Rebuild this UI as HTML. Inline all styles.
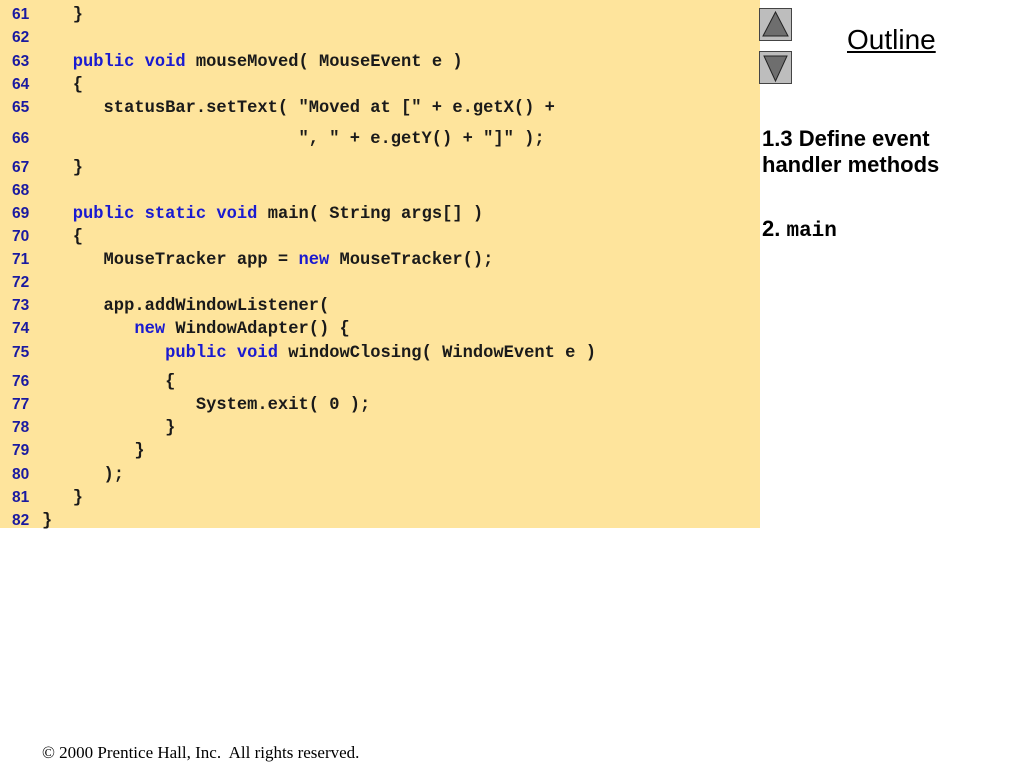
<!DOCTYPE html>
<html><head><meta charset="utf-8"><style>
body{margin:0;width:1024px;height:768px;background:#fff;position:relative;overflow:hidden}
#box{position:absolute;left:0;top:0;width:760px;height:528px;background:#FEE49C}
.l{position:absolute;left:0;height:20px;line-height:20px;white-space:pre;font:bold 17.1px "Liberation Mono",monospace;color:#1a1a1a}
.n{position:absolute;left:12px;height:20px;line-height:20px;font:bold 15.5px "Liberation Sans",sans-serif;color:#1a1aa0}
.c{position:absolute;left:42px}
.k{color:#1a1ad0}
.btn{position:absolute;left:759px;width:33px;height:33px;background:#bdbdbd;border:1px solid #444;box-sizing:border-box}
.side{position:absolute;font:bold 22px "Liberation Sans",sans-serif;color:#000}
</style></head><body>
<div id="box"></div>
<div class="l" style="top:6px"><span class="n">61</span><span class="c">   }</span></div>
<div class="l" style="top:29px"><span class="n">62</span></div>
<div class="l" style="top:53px"><span class="n">63</span><span class="c">   <span class="k">public void</span> mouseMoved( MouseEvent e )</span></div>
<div class="l" style="top:76px"><span class="n">64</span><span class="c">   {</span></div>
<div class="l" style="top:99px"><span class="n">65</span><span class="c">      statusBar.setText( "Moved at [" + e.getX() +</span></div>
<div class="l" style="top:130px"><span class="n">66</span><span class="c">                         ", " + e.getY() + "]" );</span></div>
<div class="l" style="top:159px"><span class="n">67</span><span class="c">   }</span></div>
<div class="l" style="top:182px"><span class="n">68</span></div>
<div class="l" style="top:205px"><span class="n">69</span><span class="c">   <span class="k">public static void</span> main( String args[] )</span></div>
<div class="l" style="top:228px"><span class="n">70</span><span class="c">   {</span></div>
<div class="l" style="top:251px"><span class="n">71</span><span class="c">      MouseTracker app = <span class="k">new</span> MouseTracker();</span></div>
<div class="l" style="top:274px"><span class="n">72</span></div>
<div class="l" style="top:297px"><span class="n">73</span><span class="c">      app.addWindowListener(</span></div>
<div class="l" style="top:320px"><span class="n">74</span><span class="c">         <span class="k">new</span> WindowAdapter() {</span></div>
<div class="l" style="top:344px"><span class="n">75</span><span class="c">            <span class="k">public void</span> windowClosing( WindowEvent e )</span></div>
<div class="l" style="top:373px"><span class="n">76</span><span class="c">            {</span></div>
<div class="l" style="top:396px"><span class="n">77</span><span class="c">               System.exit( 0 );</span></div>
<div class="l" style="top:419px"><span class="n">78</span><span class="c">            }</span></div>
<div class="l" style="top:442px"><span class="n">79</span><span class="c">         }</span></div>
<div class="l" style="top:466px"><span class="n">80</span><span class="c">      );</span></div>
<div class="l" style="top:489px"><span class="n">81</span><span class="c">   }</span></div>
<div class="l" style="top:512px"><span class="n">82</span><span class="c">}</span></div>

<div class="btn" style="top:8px"><svg width="31" height="31" viewBox="0 0 31 31"><polygon points="15.5,3 28,27 3,27" fill="#6e6e6e" stroke="#222" stroke-width="1"/></svg></div>
<div class="btn" style="top:51px"><svg width="31" height="31" viewBox="0 0 31 31"><polygon points="4,4 27,4 15.5,29" fill="#6e6e6e" stroke="#222" stroke-width="1"/></svg></div>
<div style="position:absolute;left:847px;top:24px;font:28px 'Liberation Sans',sans-serif;text-decoration:underline;color:#000">Outline</div>
<div class="side" style="left:762px;top:126px;line-height:26px">1.3 Define event<br>handler methods</div>
<div class="side" style="left:762px;top:216px">2. <span style="font-family:'Liberation Mono',monospace;font-size:21px">main</span></div>
<div style="position:absolute;left:42px;top:743px;font:17px 'Liberation Serif',serif;color:#000">© 2000 Prentice Hall, Inc.&nbsp; All rights reserved.</div>
</body></html>
